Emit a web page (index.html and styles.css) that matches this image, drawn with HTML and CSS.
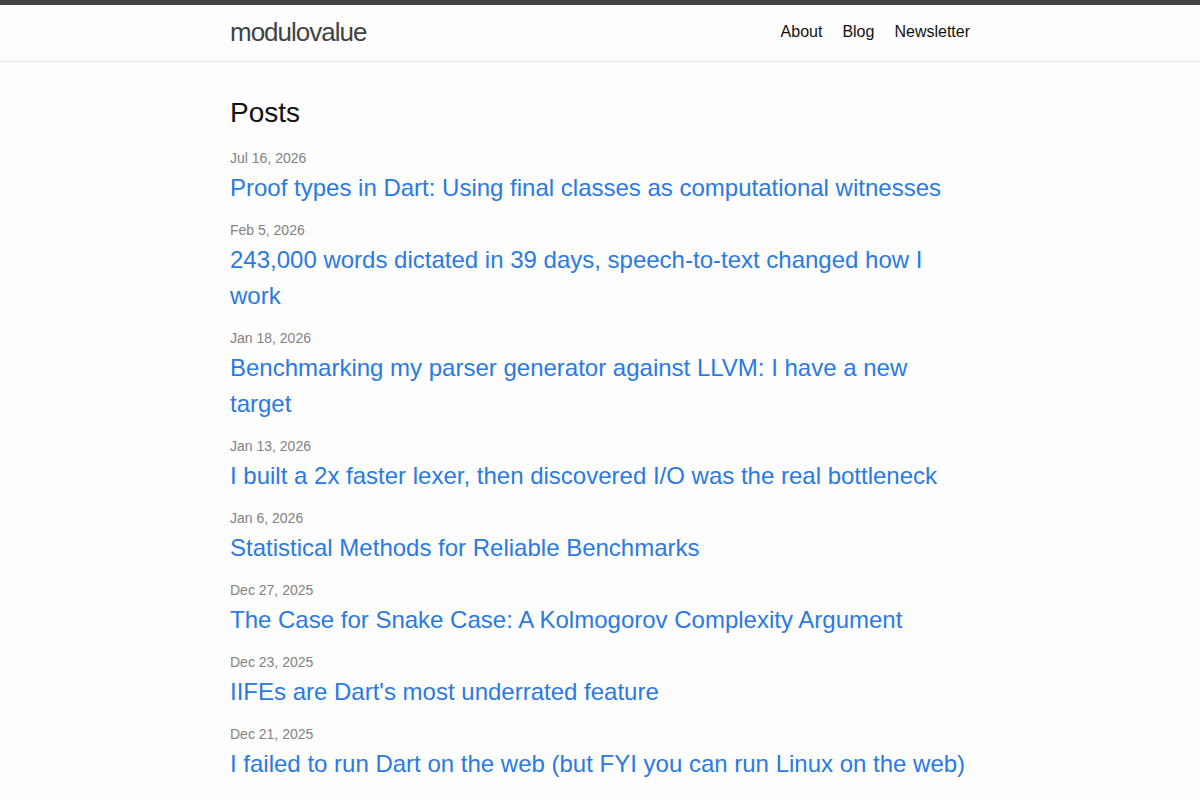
FILE: index.html
```html
<!DOCTYPE html>
<html lang="en">
<head>
    <meta charset="utf-8">
    <meta name="viewport" content="width=device-width, initial-scale=1">
    <title>modulovalue</title>
    <link rel="stylesheet" href="styles.css">
</head>
<body>
    <header class="site-header">
        <div class="wrapper header-row">
            <a class="site-title" href="#">modulovalue</a>
            <nav class="site-nav">
                <a class="page-link" href="#">About</a>
                <a class="page-link" href="#">Blog</a>
                <a class="page-link" href="#">Newsletter</a>
            </nav>
        </div>
    </header>

    <main class="page-content">
        <div class="wrapper">
            <h2 class="post-list-heading">Posts</h2>
            <ul class="post-list">
                <li>
                    <span class="post-meta">Jul 16, 2026</span>
                    <h3><a class="post-link" href="#">Proof types in Dart: Using final classes as computational witnesses</a></h3>
                </li>
                <li>
                    <span class="post-meta">Feb 5, 2026</span>
                    <h3><a class="post-link" href="#">243,000 words dictated in 39 days, speech-to-text changed how I work</a></h3>
                </li>
                <li>
                    <span class="post-meta">Jan 18, 2026</span>
                    <h3><a class="post-link" href="#">Benchmarking my parser generator against LLVM: I have a new target</a></h3>
                </li>
                <li>
                    <span class="post-meta">Jan 13, 2026</span>
                    <h3><a class="post-link" href="#">I built a 2x faster lexer, then discovered I/O was the real bottleneck</a></h3>
                </li>
                <li>
                    <span class="post-meta">Jan 6, 2026</span>
                    <h3><a class="post-link" href="#">Statistical Methods for Reliable Benchmarks</a></h3>
                </li>
                <li>
                    <span class="post-meta">Dec 27, 2025</span>
                    <h3><a class="post-link" href="#">The Case for Snake Case: A Kolmogorov Complexity Argument</a></h3>
                </li>
                <li>
                    <span class="post-meta">Dec 23, 2025</span>
                    <h3><a class="post-link" href="#">IIFEs are Dart's most underrated feature</a></h3>
                </li>
                <li>
                    <span class="post-meta">Dec 21, 2025</span>
                    <h3><a class="post-link" href="#">I failed to run Dart on the web (but FYI you can run Linux on the web)</a></h3>
                </li>
            </ul>
        </div>
    </main>
</body>
</html>
```

FILE: styles.css
```css
body {
    margin: 0;
    font: 400 16px/1.5 "Liberation Sans", Arial, Helvetica, sans-serif;
    color: #111;
    background-color: #fdfdfd;
}

a {
    text-decoration: none;
}

.wrapper {
    max-width: 740px;
    margin: 0 auto;
    padding: 0 30px;
}

.site-header {
    border-top: 5px solid #424242;
    border-bottom: 1px solid #e8e8e8;
    min-height: 56px;
}

.header-row {
    display: flex;
    justify-content: space-between;
}

.site-title {
    font-size: 26px;
    font-weight: 300;
    line-height: 54px;
    letter-spacing: -1px;
    color: #424242;
}

.site-nav {
    display: flex;
    gap: 20px;
    line-height: 54px;
}

.page-link {
    color: #111;
}

.page-content {
    padding: 30px 0;
}

.post-list-heading {
    font-size: 28px;
    font-weight: 400;
    line-height: 42px;
    margin: 0 0 14px;
}

.post-list {
    list-style: none;
    margin: 0;
    padding: 0;
}

.post-list h3 {
    margin: 0 0 14px;
    font-weight: 400;
}

.post-meta {
    display: block;
    font-size: 14px;
    line-height: 21px;
    margin-bottom: 1px;
    color: #828282;
}

.post-link {
    display: block;
    font-size: 24px;
    line-height: 36px;
    color: #2a7ae2;
}
```
